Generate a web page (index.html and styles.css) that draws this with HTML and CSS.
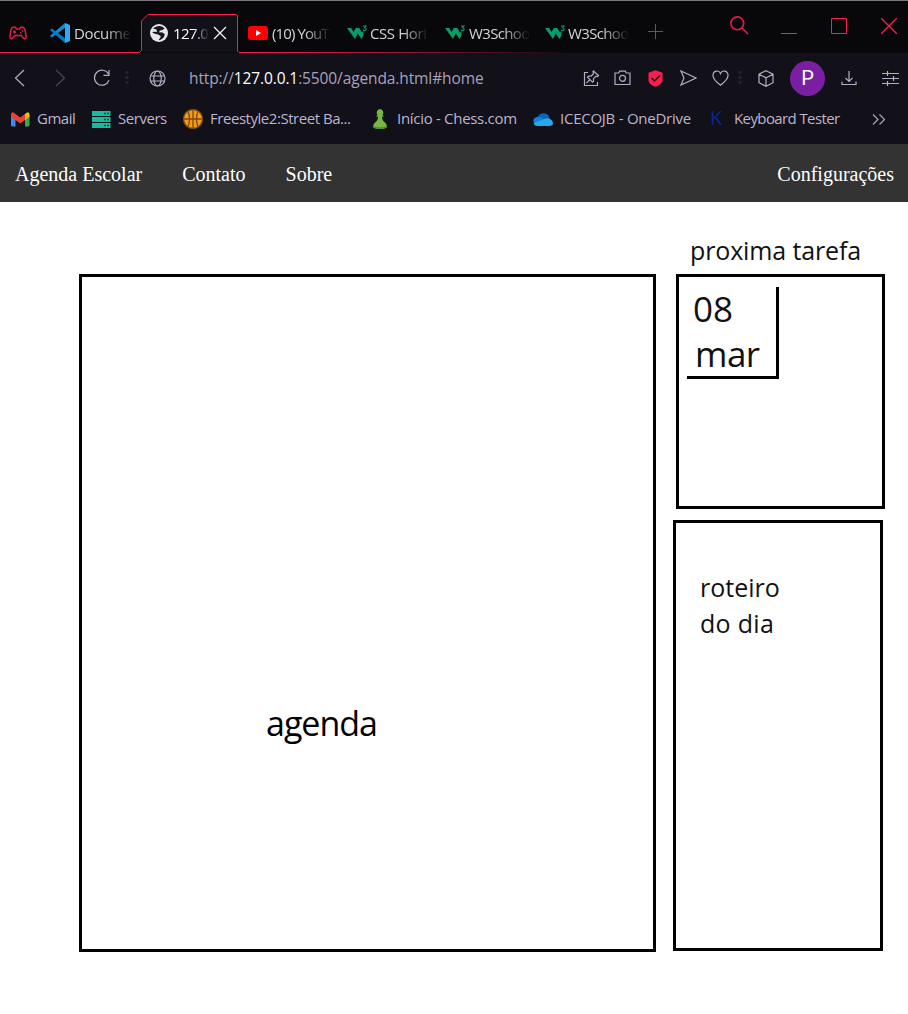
FILE: index.html
```html
<!DOCTYPE html>
<html lang="pt-BR">
<head>
<meta charset="utf-8">
<title>Agenda Escolar</title>
<link rel="stylesheet" href="styles.css">
</head>
<body>
<svg class="defs" width="0" height="0">
  <symbol id="w3" viewBox="0 0 20 16">
    <path d="M0 3h4.200l2.300 4L8.800 3h3.400l2.800 4.500L16.500 6v4.500L14.500 14l-3.700-5.500L8 14z" fill="#0a9c68"/>
    <path d="M16 1h3l-1.500 1.700c2.300.2 2 3.100-.2 2.900q-1-.1-1.300-1" fill="none" stroke="#0a9c68" stroke-width="1.100"/>
  </symbol>
</svg>
<header class="browser">
  <div class="tabs">
    <svg class="outline" width="908" height="53" viewBox="0 0 908 53">
      <defs><linearGradient id="fade" gradientUnits="userSpaceOnUse" x1="238" y1="0" x2="575" y2="0"><stop offset="0" stop-color="#fa1e4e"/><stop offset=".25" stop-color="#c81b42"/><stop offset="1" stop-color="#fa1e4e" stop-opacity="0"/></linearGradient></defs>
      <path d="M141.500 52.500V21L148 14.500h89.500v38z" fill="#121019"/>
      <path d="M0 52.500h139.500l2-2V21L148 14.500h88q1.500 0 1.500 1.500v35l1.500 1.500" fill="none" stroke="#fa1e4e"/>
      <rect x="239" y="52" width="336" height="1" fill="url(#fade)"/>
    </svg>
    <svg class="gx" width="18" height="14" viewBox="0 0 18 14" fill="none" stroke="#e01d47" stroke-width="1.500"><path d="M4 1.200h2.500L7.500 3h3l1-1.800H14q1.500.5 2.100 3l1 6.300q0 3-2.200 2-1.500-1-2.400-3H5.500q-.9 2-2.400 3-2.200 1-2.200-2l1-6.300Q2.500 1.700 4 1.200z"/><path d="M4 6h3M5.500 4.500v3M11 6.800h1.400M13 5.200h1.400"/></svg>
    <svg class="vs" width="20" height="20" viewBox="0 0 20 20"><path d="M15 0 0 13l1.800 1.500L16 4z" fill="#0f8dd9"/><path d="M1.800 5.500 0 7l15 13 1-4z" fill="#0679c5"/><path d="m15 0 5 2v16l-5 2z" fill="#2daaf2"/></svg>
    <span class="tab-text t1">Docume</span>
    <svg class="world" width="18" height="18" viewBox="0 0 18 18"><circle cx="9" cy="9" r="9" fill="#e6e6ea"/><path d="M3 4.500Q6 1.500 10 2q3.500.5 4.500 2.500L12.500 6 10 6.500 9 8.200l3.500.3 2.300 1.800q-.3 2.700-2.300 4.200l-2.800 1.700-1-.7 1.500-1.500.5-2L8 10.500 4 9.500 2 8l3-.3L7 8l-.5-2.500z" fill="#17151e"/></svg>
    <span class="tab-text t2">127.0</span>
    <svg class="close" width="14" height="14" viewBox="0 0 14 14" stroke="#f2f2f5" stroke-width="1.300"><path d="m1 1 12 12M13 1 1 13"/></svg>
    <svg class="yt" width="20" height="14" viewBox="0 0 20 14"><rect width="20" height="14" rx="3" fill="#f00"/><path d="m8 4 5 3-5 3z" fill="#fff"/></svg>
    <span class="tab-text t3">(10) YouT</span>
    <svg class="w3" width="20" height="16"><use href="#w3"/></svg>
    <span class="tab-text t4">CSS Hori</span>
    <svg class="w3" width="20" height="16"><use href="#w3"/></svg>
    <span class="tab-text t5">W3Schoo</span>
    <svg class="w3" width="20" height="16"><use href="#w3"/></svg>
    <span class="tab-text t5">W3Schoo</span>
    <svg class="plus" width="15" height="15" viewBox="0 0 15 15" stroke="#d81d47"><path d="M0 7.500h15M7.500 0v15"/></svg>
    <svg class="search" width="19" height="19" viewBox="0 0 19 19" fill="none" stroke="#e01d47" stroke-width="1.600"><circle cx="7.300" cy="7.300" r="6.400"/><path d="m12 12 6 6"/></svg>
    <svg class="win" width="16" height="16" viewBox="0 0 16 16" stroke="#fa1e4e"><path d="M0 15.500h16"/></svg>
    <svg class="win" width="16" height="16" viewBox="0 0 16 16" fill="none" stroke="#fa1e4e"><path d="M.5.5h15v15H.5z"/></svg>
    <svg class="win" width="16" height="16" viewBox="0 0 16 16" stroke="#fa1e4e" stroke-width="1.300"><path d="m0 0 16 16M16 0 0 16"/></svg>
  </div>

  <div class="toolbar">
    <svg width="11" height="18" viewBox="0 0 11 18"><path d="M10 1 1.500 9 10 17"/></svg>
    <svg class="dim" width="11" height="18" viewBox="0 0 11 18"><path d="m1 1 8.500 8L1 17"/></svg>
    <svg width="18" height="18" viewBox="0 0 18 18"><path d="M15.500 5A7.500 7.500 0 1 0 16 11.300M16 1v5.300h-5.500"/></svg>
    <svg width="4" height="14" viewBox="0 0 4 14"><path d="M.5 0h3v3h-3zM.5 5h3v3h-3zM.5 10h3v3h-3z" fill="#25222f" stroke="none"/></svg>
    <svg width="17" height="17" viewBox="0 0 17 17"><circle cx="8.500" cy="8.500" r="7.500"/><ellipse cx="8.500" cy="8.500" rx="3.700" ry="7.500"/><path d="M1.500 6h14M1.500 11h14"/></svg>
    <span class="url">http://<b>127.0.0.1</b>:5500/agenda.html#home</span>
    <svg width="17" height="17" viewBox="0 0 17 17"><path d="M5 2.500H1.500v13h13V12M10.500 1l5 4.500-1 1-1.500-.3-2.500 2.500v2.500l-1 1-5-5 1-1H8l2.500-2.500-.5-2zM7 9.500l-3.500 3.700"/></svg>
    <svg width="17" height="16" viewBox="0 0 17 16"><path d="M1 3h3.700l1-1.800h5.600l1 1.800H16v11.500H1z"/><circle cx="8.500" cy="8.300" r="3"/></svg>
    <svg width="15" height="17" viewBox="0 0 15 17"><path d="m7.500.3 7 2.400v8q-1 4-7 6-6-2-7-6v-8z" fill="#fa1e4e" stroke="none"/><path d="m3.500 8 3 3L12 5.500" stroke="#121019" stroke-width="1.500"/></svg>
    <svg width="17" height="16" viewBox="0 0 17 16"><path d="m1 1 15 7L1 15l3-7z"/></svg>
    <svg width="17" height="16" viewBox="0 0 17 16"><path d="M8.500 15.200Q1 9.500 1 5.500C1 .5 7-.5 8.500 3.500 10-.5 16 .5 16 5.500q0 4-7.500 9.700z"/></svg>
    <svg width="4" height="14" viewBox="0 0 4 14"><path d="M.5 0h3v3h-3zM.5 5h3v3h-3zM.5 10h3v3h-3z" fill="#25222f" stroke="none"/></svg>
    <svg width="16" height="17" viewBox="0 0 16 17"><path d="m8 .7 7 3.500v8.500l-7 3.600-7-3.600V4.200zM1 4.200l7 3.700 7-3.700M8 7.900v8.400"/></svg>
    <span class="avatar">P</span>
    <svg width="16" height="16" viewBox="0 0 16 16"><path d="M8 1v10.500M4.500 8 8 11.500 11.500 8M1 11.500v3h14v-3"/></svg>
    <svg width="17" height="16" viewBox="0 0 17 16"><path d="M0 3.500h17M0 8.500h17M0 13.500h17M5.500 1v5M11.500 6v5M5.500 11v5"/></svg>
  </div>

  <div class="bookmarks">
    <svg width="19" height="15" viewBox="0 0 19 15"><path d="M0 3v10q0 1.500 1.500 1.500h3V6z" fill="#4285f4"/><path d="M18.500 3v10q0 1.500-1.500 1.500h-3V6z" fill="#34a853"/><path d="M14 2v6l4.500-3.300V2Q17.500-1.300 14 2z" fill="#fbbc04"/><path d="M0 4.700V2Q1-1.300 4.500 2l4.700 3.500L14 2v6l-4.800 3.600L4.500 8z" fill="#ea4335"/></svg>
    <span class="b1">Gmail</span>
    <svg width="19" height="17" viewBox="0 0 19 17"><path d="M0 0h18.500v5H0zM0 6h18.500v5H0zM0 12h18.500v5H0z" fill="#1abc9c"/><path d="M12 2.500h2M15 2.500h2M12 8.500h2M15 8.500h2M12 14.500h2M15 14.500h2" stroke="#0b3d3a" stroke-width="1.300"/></svg>
    <span class="b2">Servers</span>
    <svg width="20" height="20" viewBox="0 0 20 20" fill="none" stroke="#7d4a10" stroke-width="1.300"><circle cx="10" cy="10" r="9.500" fill="#f39c1c"/><path d="M10 0v20M0 10h20M5 2q3 8 0 16M15 2q-3 8 0 16"/></svg>
    <span class="b3">Freestyle2:Street Ba...</span>
    <svg width="14" height="20" viewBox="0 0 14 20"><path d="M7 0a3.700 3.700 0 0 1 2.500 6l1.800 1.500H9q0 4 3 6 2 1.500 2 4.500-2 2-7 2t-7-2q0-3 2-4.500 3-2 3-6H2.700L4.500 6A3.700 3.700 0 0 1 7 0z" fill="#78b644"/><path d="M0 17q7 2.500 14 0v1q-2 2-7 2t-7-2z" fill="#4f9138"/></svg>
    <span class="b4">Início - Chess.com</span>
    <svg width="20" height="13" viewBox="0 0 20 13"><path d="M4 5Q7-1 12.500.5 16 1.500 16.500 5l-5 4z" fill="#0865b8"/><path d="M1 10Q-1 5 4 4q3-.5 5 1l8 6z" fill="#0f83dc"/><path d="M4.500 13Q1 13 1 10l9-3.500Q16 3.500 19 7.500q3 5.500-3 5.500z" fill="#28a8ea"/></svg>
    <span class="b5">ICECOJB - OneDrive</span>
    <span class="k">K</span>
    <span class="b6">Keyboard Tester</span>
    <svg width="14" height="11" viewBox="0 0 14 11" fill="none" stroke="#aaa4ba" stroke-width="1.200"><path d="m1 .5 5 5-5 5M7.500.5l5 5-5 5"/></svg>
  </div>
</header>

<nav class="menu">
  <a>Agenda Escolar</a>
  <a>Contato</a>
  <a>Sobre</a>
  <a class="right">Configurações</a>
</nav>

<main>
  <section class="agenda"><span>agenda</span></section>
  <aside>
    <h2>proxima tarefa</h2>
    <section class="task"><div class="date"><span class="day">08</span><span class="month">mar</span></div></section>
    <section class="route"><span class="r1">roteiro</span><span class="r2">do dia</span></section>
  </aside>
</main>
</body>
</html>
```

FILE: styles.css
```css
* { box-sizing: border-box; }
body { margin: 0; width: 908px; height: 1014px; overflow: hidden; background: #fff; font-family: "Open Sans", "Noto Sans", sans-serif; }
.defs { position: absolute; }
svg { display: block; flex: none; }
span { white-space: nowrap; }
.browser { height: 144px; background: #121019; }

.tabs { position: relative; height: 53px; background: #08080b; border-top: 1px solid #77797a; display: grid; align-items: center; padding-top: 22px; padding-bottom: 10px;
  grid-template-rows: 20px;
  grid-template-columns: 9px 41px 24px 76px 23px 40px 35px 24px 75px 23px 75px 24px 76px 23px 80px 82px 51px 50px 50px 27px; }
.outline { position: absolute; left: 0; top: -1px; }
.tabs > :not(.outline) { position: relative; }
.gx { grid-column: 2; }
.tab-text { font-size: 15px; line-height: 20px; color: #d6d6da; letter-spacing: -.35px; -webkit-mask-image: linear-gradient(90deg, #000 55%, transparent); mask-image: linear-gradient(90deg, #000 55%, transparent); }
.t1 { width: 58px; }
.t2 { width: 36px; color: #fff; letter-spacing: -.6px; }
.t3 { width: 59px; letter-spacing: -.9px; }
.t4 { width: 59px; letter-spacing: -.4px; }
.t5 { width: 61px; letter-spacing: -.65px; }
.search { margin-top: -16px; }
.win { margin-top: -14px; }
.plus { margin-top: -3px; }

.toolbar { height: 50px; display: grid; align-items: center;
  grid-template-columns: 14px 41px 38px 32px 24px 40px 394px 31px 34px 32px 32px 26px 20px 32px 51px 41px 25px; }
.toolbar > :first-child { grid-column: 2; }
.toolbar svg { fill: none; stroke: #b4adc5; stroke-width: 1.200; }
.toolbar .dim { stroke: #4b4755; }
.url { font-size: 15.5px; color: #aaa1bc; letter-spacing: -.11px; line-height: 22px; }
.url b { font-weight: 400; color: #fff; }
.avatar { width: 35px; height: 35px; border-radius: 50%; background: #7b1fa2; color: #fff; font: 400 20px/35px Roboto, sans-serif; text-align: center; }

.bookmarks { height: 32px; display: grid; align-items: center; font-size: 15px; line-height: 22px; color: #bdb4ce;
  grid-template-columns: 11px 26px 55px 26px 65px 27px 163px 24px 136px 27px 150px 24px 138px 36px; }
.bookmarks > :first-child { grid-column: 2; }
.bookmarks span { letter-spacing: -.3px; margin-top: -2px; }
.bookmarks .b1 { letter-spacing: -.5px; }
.bookmarks .b2, .bookmarks .b3 { letter-spacing: -.46px; }
.bookmarks .b5 { letter-spacing: -.25px; }
.bookmarks .b6 { letter-spacing: -.6px; }
.bookmarks .k { color: #0a2590; font-size: 20px; }

.menu { height: 58px; background: #333; display: flex; align-items: center; gap: 40px; padding: 2px 14px 0 15px; color: #fff; font: 20px/22px "Liberation Serif", serif; }
.menu .right { margin-left: auto; }

main { display: flex; align-items: flex-start; padding: 32px 0 0 79px; color: #111; }
.agenda { width: 577px; height: 678px; margin: 40px 17px 0 0; border: 3px solid #000; padding: 422px 0 0 184px; font-size: 34px; line-height: 48px; letter-spacing: -1px; color: #000; }
h2 { margin: -1px 0 0 17px; height: 41px; font-size: 25px; line-height: 34px; letter-spacing: -.13px; font-weight: 400; white-space: nowrap; }
.task { width: 209px; height: 235px; margin-left: 3px; border: 3px solid #000; padding: 10px 0 0 8px; }
.date { width: 92px; height: 92px; border: solid #000; border-width: 0 3px 3px 0; display: flex; flex-direction: column; padding-left: 6px; font-size: 35px; line-height: 45px; }
.date span { margin-top: -1px; margin-bottom: 1px; }
.month { padding-left: 2px; letter-spacing: -.5px; }
.route { width: 210px; height: 431px; margin-top: 11px; border: 3px solid #000; padding: 46px 0 0 24px; display: flex; flex-direction: column; font-size: 25px; line-height: 36px; }
.r2 { letter-spacing: .3px; }
```
